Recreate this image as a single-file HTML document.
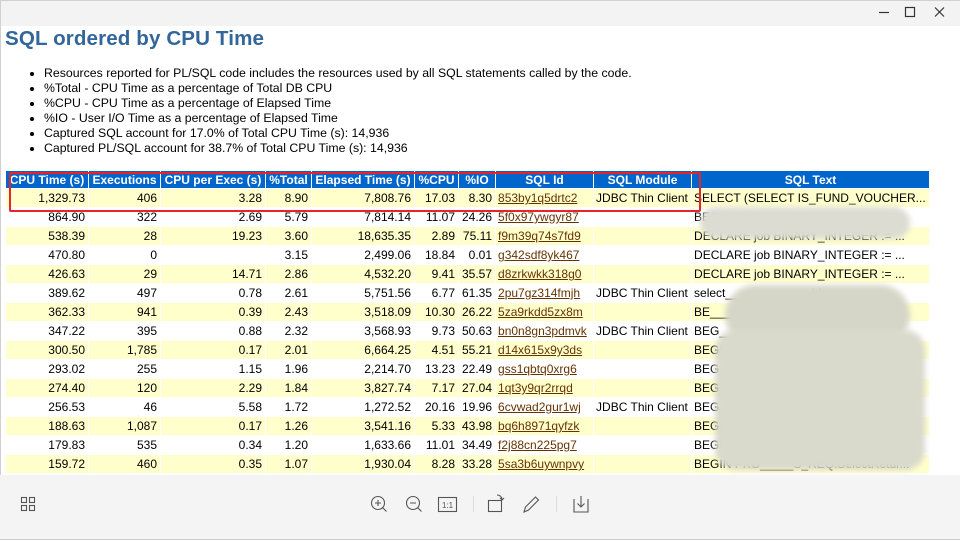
<!DOCTYPE html>
<html><head><meta charset="utf-8"><style>
*{margin:0;padding:0;box-sizing:border-box}
body{width:960px;height:540px;overflow:hidden;background:#fff;font-family:"Liberation Sans",Arial,sans-serif;position:relative;color:#000}
#top{position:absolute;left:0;top:0;width:960px;height:26px;background:#f3f3f3;border-top:1px solid #d0d0d0}
#bot{position:absolute;left:0;top:475px;width:960px;height:65px;background:#f4f4f4;border-bottom:1px solid #ccc}
#lb{position:absolute;left:0;top:0;width:1px;height:540px;background:#d0d0d0}
h1{position:absolute;left:5px;top:27px;font-size:20.6px;font-weight:bold;color:#336699;letter-spacing:0.1px}
ul{position:absolute;left:44px;top:66px;font-size:12.3px;line-height:15px;list-style:disc}
table{position:absolute;left:5px;top:170px;border-collapse:separate;border-spacing:1px;table-layout:fixed;font-size:12px}
th{background:#0066cc;color:#fff;font-weight:bold;height:17px;padding:0 2px;text-align:center;white-space:nowrap;overflow:hidden}
td{height:18px;padding:0 3px;white-space:nowrap;overflow:hidden;text-align:right}
tr.o td{background:#ffffcc}
td.l{text-align:left;padding:0 2px}
td a{color:#663300;text-decoration:underline}
#red{position:absolute;left:9px;top:172px;width:692px;height:40px;border:2.5px solid #e8232a;border-radius:2px}
.blob{position:absolute;background:#d8d8cc;filter:blur(3px);border-radius:40px}
svg{position:absolute}
</style></head><body>
<div id="top"></div>
<svg style="left:870px;top:5px" width="90" height="16"><path d="M9 7.5h10" stroke="#333" stroke-width="1.2"/><rect x="35.5" y="2.5" width="9" height="9" fill="none" stroke="#333" stroke-width="1.2"/><path d="M65 2.5l9 9M74 2.5l-9 9" stroke="#333" stroke-width="1.2"/></svg>
<h1>SQL ordered by CPU Time</h1>
<ul>
<li>Resources reported for PL/SQL code includes the resources used by all SQL statements called by the code.</li>
<li>%Total - CPU Time as a percentage of Total DB CPU</li>
<li>%CPU - CPU Time as a percentage of Elapsed Time</li>
<li>%IO - User I/O Time as a percentage of Elapsed Time</li>
<li>Captured SQL account for 17.0% of Total CPU Time (s): 14,936</li>
<li>Captured PL/SQL account for 38.7% of Total CPU Time (s): 14,936</li>
</ul>
<table>
<colgroup><col style="width:82px"><col style="width:71px"><col style="width:104px"><col style="width:45px"><col style="width:102px"><col style="width:43px"><col style="width:31px"><col style="width:97px"><col style="width:97px"><col style="width:237px"></colgroup>
<tr><th>CPU Time (s)</th><th>Executions</th><th>CPU per Exec (s)</th><th>%Total</th><th>Elapsed Time (s)</th><th>%CPU</th><th>%IO</th><th>SQL Id</th><th>SQL Module</th><th>SQL Text</th></tr>
<tr class="o"><td>1,329.73</td><td>406</td><td>3.28</td><td>8.90</td><td>7,808.76</td><td>17.03</td><td>8.30</td><td class="l"><a>853by1q5drtc2</a></td><td class="l">JDBC Thin Client</td><td class="l">SELECT (SELECT IS_FUND_VOUCHER...</td></tr>
<tr><td>864.90</td><td>322</td><td>2.69</td><td>5.79</td><td>7,814.14</td><td>11.07</td><td>24.26</td><td class="l"><a>5f0x97ywgyr87</a></td><td class="l"></td><td class="l">BEGIN PKG_____TR_________ea...</td></tr>
<tr class="o"><td>538.39</td><td>28</td><td>19.23</td><td>3.60</td><td>18,635.35</td><td>2.89</td><td>75.11</td><td class="l"><a>f9m39q74s7fd9</a></td><td class="l"></td><td class="l">DECLARE job BINARY_INTEGER := ...</td></tr>
<tr><td>470.80</td><td>0</td><td></td><td>3.15</td><td>2,499.06</td><td>18.84</td><td>0.01</td><td class="l"><a>g342sdf8yk467</a></td><td class="l"></td><td class="l">DECLARE job BINARY_INTEGER := ...</td></tr>
<tr class="o"><td>426.63</td><td>29</td><td>14.71</td><td>2.86</td><td>4,532.20</td><td>9.41</td><td>35.57</td><td class="l"><a>d8zrkwkk318g0</a></td><td class="l"></td><td class="l">DECLARE job BINARY_INTEGER := ...</td></tr>
<tr><td>389.62</td><td>497</td><td>0.78</td><td>2.61</td><td>5,751.56</td><td>6.77</td><td>61.35</td><td class="l"><a>2pu7gz314fmjh</a></td><td class="l">JDBC Thin Client</td><td class="l">select_____________id,...</td></tr>
<tr class="o"><td>362.33</td><td>941</td><td>0.39</td><td>2.43</td><td>3,518.09</td><td>10.30</td><td>26.22</td><td class="l"><a>5za9rkdd5zx8m</a></td><td class="l"></td><td class="l">BE__________oucherP_C...</td></tr>
<tr><td>347.22</td><td>395</td><td>0.88</td><td>2.32</td><td>3,568.93</td><td>9.73</td><td>50.63</td><td class="l"><a>bn0n8gn3pdmvk</a></td><td class="l">JDBC Thin Client</td><td class="l">BEG_______________ect...</td></tr>
<tr class="o"><td>300.50</td><td>1,785</td><td>0.17</td><td>2.01</td><td>6,664.25</td><td>4.51</td><td>55.21</td><td class="l"><a>d14x615x9y3ds</a></td><td class="l"></td><td class="l">BEGI__________Set...</td></tr>
<tr><td>293.02</td><td>255</td><td>1.15</td><td>1.96</td><td>2,214.70</td><td>13.23</td><td>22.49</td><td class="l"><a>gss1qbtq0xrg6</a></td><td class="l"></td><td class="l">BEG_________Y...</td></tr>
<tr class="o"><td>274.40</td><td>120</td><td>2.29</td><td>1.84</td><td>3,827.74</td><td>7.17</td><td>27.04</td><td class="l"><a>1qt3y9qr2rrqd</a></td><td class="l"></td><td class="l">BEG_______________</td></tr>
<tr><td>256.53</td><td>46</td><td>5.58</td><td>1.72</td><td>1,272.52</td><td>20.16</td><td>19.96</td><td class="l"><a>6cvwad2gur1wj</a></td><td class="l">JDBC Thin Client</td><td class="l">BEG________________...</td></tr>
<tr class="o"><td>188.63</td><td>1,087</td><td>0.17</td><td>1.26</td><td>3,541.16</td><td>5.33</td><td>43.98</td><td class="l"><a>bq6h8971qyfzk</a></td><td class="l"></td><td class="l">BEGI_______________</td></tr>
<tr><td>179.83</td><td>535</td><td>0.34</td><td>1.20</td><td>1,633.66</td><td>11.01</td><td>34.49</td><td class="l"><a>f2j88cn225pg7</a></td><td class="l"></td><td class="l">BEGIN_____________ctv...</td></tr>
<tr class="o"><td>159.72</td><td>460</td><td>0.35</td><td>1.07</td><td>1,930.04</td><td>8.28</td><td>33.28</td><td class="l"><a>5sa3b6uywnpvy</a></td><td class="l"></td><td class="l">BEGIN PKG_____S_REQ.SelectRetur...</td></tr>
</table>
<div class="blob" style="left:700px;top:207px;width:210px;height:32px;background:#dcdcd2"></div>
<div class="blob" style="left:725px;top:285px;width:185px;height:60px;background:#d6d6c8"></div>
<div class="blob" style="left:715px;top:330px;width:210px;height:140px;background:#d9d9cc;border-radius:20px"></div>
<div id="red"></div>
<div id="lb"></div>
<div id="bot"></div>
<svg style="left:0;top:490px" width="620" height="30" fill="none" stroke="#555" stroke-width="1.1">
<rect x="21.5" y="7.5" width="5" height="5"/><rect x="29.5" y="7.5" width="5" height="5"/><rect x="21.5" y="15.5" width="5" height="5"/><rect x="29.5" y="15.5" width="5" height="5"/>
<circle cx="378" cy="13" r="6.5"/><path d="M382.5 17.5l4 4M375 13h6M378 10v6"/>
<circle cx="413" cy="13" r="6.5"/><path d="M417.5 17.5l4 4M410 13h6"/>
<rect x="438.5" y="7.5" width="18" height="14"/>
<text x="447.5" y="18" font-size="8" fill="#555" stroke="none" text-anchor="middle" font-family="Liberation Sans">1:1</text>
<path d="M473.5 6v16M556.5 6v16" stroke="#ddd"/>
<rect x="488.5" y="10.5" width="13" height="11"/><path d="M497 5c3 0 5 2 5 5M500 8l2 2 2-2"/>
<path d="M524 22l1.5-5 10-10 3 3-10 10z"/>
<path d="M574 9v13h14V9M581 6v11M577.5 13.5l3.5 3.5 3.5-3.5"/>
</svg>
</body></html>
